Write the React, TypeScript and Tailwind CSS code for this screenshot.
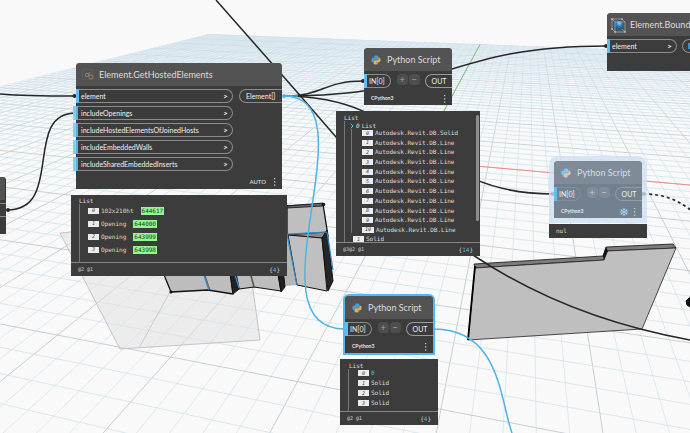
import React from "react";

const SANS = "font-['Lato','Noto_Sans',sans-serif]";
const MONO = "font-['DejaVu_Sans_Mono','Liberation_Mono',monospace]";

// Perspective ground grid: two line families, each with its own vanishing point
const HORIZON = -46;
const VP_A = 529;
const VP_B = -1912;

const lineA = (k: number) => {
  const bottom = 103 + 33.33 * k;
  return (y: number) => VP_A + ((bottom - VP_A) * (y - HORIZON)) / (433 - HORIZON);
};

const lineB = (k: number) => {
  const slope = 1 / (5.168 + 0.3047 * k);
  return (x: number) => HORIZON + (x - VP_B) * slope;
};

const range = (from: number, to: number) => Array.from({ length: to - from + 1 }, (_, i) => from + i);

const Grid: React.FC = () => {
  const xAxis = lineB(20);
  const yAxis = lineA(5);
  return (
    <g clipPath="url(#ground)" fill="none">
      {range(-45, 55).map((k) => (
        <line
          key={`a${k}`}
          x1={lineA(k)(20)}
          y1={20}
          x2={lineA(k)(433)}
          y2={433}
          stroke={k % 5 === 0 ? "url(#major)" : "#d3e4ee"}
          strokeWidth={0.8}
        />
      ))}
      {range(-9, 70).map((k) => (
        <line
          key={`b${k}`}
          x1={0}
          y1={lineB(k)(0)}
          x2={700}
          y2={lineB(k)(700)}
          stroke={k % 5 === 0 ? "url(#major)" : "#d0e3ee"}
          strokeWidth={0.8}
        />
      ))}
      <line x1={415} y1={xAxis(415)} x2={700} y2={xAxis(700)} stroke="#f08c8c" />
      <line x1={yAxis(20)} y1={20} x2={yAxis(161)} y2={161} stroke="#7cbf7c" />
    </g>
  );
};

const Solids: React.FC = () => (
  <g strokeLinejoin="round">
    <path d="M60 233L71 232H245L260 340L120 349Z" fill="#dfe0df" fillOpacity=".5" stroke="#b9b9b9" strokeWidth=".8" />
    <path d="M170 292L139 348" stroke="#c0c0c0" strokeWidth=".8" />

    <path d="M287 206L323 204L328 236L287 236Z" fill="#bfbfbf" stroke="#111" strokeWidth="1.3" />
    <path d="M287 206L323 203V206L287 208Z" fill="#666" stroke="#111" strokeWidth=".8" />
    <circle cx="323.5" cy="204.5" r="1.7" fill="#111" />
    <path d="M288 235L327 232L322 238Z" fill="#8b8b8b" stroke="#222" strokeWidth=".8" />
    <path d="M283 262L285 286L297 285L288 235H283Z" fill="#b5b5b5" />
    <path d="M288 235L322 238L327 291L297 285Z" fill="#c0c0c0" stroke="#111" />
    <path d="M322 238L327 230L333 281L328 291Z" fill="#262626" stroke="#111" />
    <path d="M287 234L297 285M287 234L327 232L333 270" fill="none" stroke="#2f86c4" strokeWidth="1.2" />

    <path d="M160 265L171 292L208 290L233 294L229 265Z" fill="#bdbdbd" stroke="#111" strokeWidth="1.3" />
    <path d="M229 265L235 268L239 289L233 294Z" fill="#222" stroke="#111" />
    <path d="M235 268L239 289L254 287L281 291L277 268Z" fill="#bdbdbd" stroke="#111" strokeWidth="1.2" />
    <path d="M277 268H283L285 287L281 292Z" fill="#222" stroke="#111" />
    <path d="M203 272L209 290M233 268L239 288" stroke="#2f86c4" strokeWidth="1.4" />
    <path d="M249 268L254 287" stroke="#555" strokeWidth="1.5" />
    <path d="M204 272L210 290" stroke="#555" strokeWidth=".8" />
    <circle cx="171" cy="292" r="1.6" fill="#111" />

    <path d="M474 264L603 256L606 247L673 244L676 248L607 251L604 260L475 268Z" fill="#7c7c7c" stroke="#111" strokeWidth=".8" />
    <path d="M475 268L604 260L607 251L676 248L642 329L468 340Z" fill="#bfbfbf" stroke="#222" strokeWidth=".8" />
    <path d="M603 256L606 247L608 251L604 260Z" fill="#111" />
    <path d="M475 266L468 340" stroke="#000" strokeWidth="1.8" />
    <path d="M686 301L690 297V307L687 305Z" fill="#111" stroke="#111" />
  </g>
);

const Wires: React.FC = () => (
  <g fill="none" stroke="#262626" strokeWidth="1.5">
    <path d="M216 0L297 92L336 137C390 195 430 228 476 257C520 286 590 322 690 340" />
    <path d="M0 94C25 96 50 96 75 96" />
    <path d="M7 210C65 210 22 113 76 113" />
    <path d="M284 96C324 96 323 81 364 81" />
    <path d="M284 96C446 96 445 46 607 46" />
    <path d="M284 96C418 96 419 194 553 194" />
    <path d="M643 194C664 194 678 200 692 211" strokeDasharray="3 3" strokeWidth="1.7" />
    <g stroke="#4db4e8">
      <path d="M284 96C375 96 245 329 345 329" />
      <path d="M434 329C500 329 500 400 512 433" />
      <path d="M284 96H298" />
    </g>
    <g fill="#262626" stroke="none">
      <circle cx="74.500" cy="96" r="2" />
      <circle cx="8" cy="210" r="2" />
      <circle cx="363" cy="81" r="2" />
      <circle cx="606" cy="46" r="2" />
      <circle cx="552.500" cy="194" r="2" />
      <circle cx="643.500" cy="194" r="2" />
      <circle cx="284" cy="96" r="2" fill="#4db4e8" />
    </g>
  </g>
);

const PythonIcon: React.FC<{ faded?: boolean }> = ({ faded }) => (
  <svg viewBox="0 0 24 24" className="size-2.5 shrink-0">
    <path
      fill={faded ? "#7ccbf7" : "#4a9fd8"}
      d="M11.900 1C6.500 1 6.800 3.400 6.800 3.400V6H12v.8H4.700S1 6.400 1 12s3.200 5.400 3.200 5.400h2v-2.700s-.1-3.200 3.200-3.200h5.300s3-.1 3-3V4S18.200 1 11.900 1ZM9 2.700a.95.95 0 1 1 0 1.900.95.95 0 0 1 0-1.900Z"
    />
    <path
      fill={faded ? "#dfc9ab" : "#dfb15b"}
      d="M12.100 23c5.400 0 5.100-2.400 5.100-2.400V18H12v-.8h7.300S23 17.600 23 12s-3.200-5.400-3.200-5.400h-2v2.700s.1 3.200-3.200 3.200H9.300s-3-.1-3 3V20s-.5 3 5.800 3Zm2.900-1.700a.95.95 0 1 1 0-1.900.95.95 0 0 1 0 1.900Z"
    />
  </svg>
);

const HostedIcon: React.FC = () => (
  <svg viewBox="0 0 12 12" className="size-3 shrink-0" fill="none">
    <rect x=".5" y=".5" width="10" height="10" stroke="#777" strokeWidth=".5" strokeDasharray="1 1" />
    <circle cx="5" cy="6" r="1.800" stroke="#929292" strokeWidth=".8" />
    <circle cx="9" cy="8" r="2" stroke="#b07a50" strokeWidth=".9" />
    <path d="M7 3L8 6" stroke="#b07a50" strokeWidth=".8" />
  </svg>
);

const BoxIcon: React.FC = () => (
  <svg viewBox="0 0 16 16" className="size-4 shrink-0" fill="none">
    <defs>
      <radialGradient id="ball" cx=".6" cy=".3" r=".7">
        <stop offset="0" stopColor="#8fd0f5" />
        <stop offset=".5" stopColor="#2580c4" />
        <stop offset="1" stopColor="#145a92" />
      </radialGradient>
    </defs>
    <circle cx="8.500" cy="8" r="4.200" fill="url(#ball)" />
    <path d="M2 2H12L15 5V15H5L2 12ZM2 2L5 5H15M5 5V15M12 12L15 15" stroke="#b9bec2" strokeWidth=".6" />
    <path d="M1.300 1.300h1.400v1.400H1.300zM11.300 1.300h1.400v1.400h-1.400zM14.300 14.300h1.400v1.400h-1.400zM1.300 11.300h1.400v1.400H1.300zM4.300 14.300h1.400v1.400H4.300z" fill="#c9cdd0" />
  </svg>
);

const MoreButton: React.FC = () => (
  <button aria-label="More" className="flex">
    <svg viewBox="0 0 2 8" className="h-2 w-0.5" fill="#c8c8c8">
      <path d="M0 0h1.300v1.300H0zM0 3.200h1.300v1.300H0zM0 6.400h1.300v1.300H0z" />
    </svg>
  </button>
);

interface InPortProps {
  label: string;
  tone?: "plain" | "default";
  chevron?: boolean;
}

const InPort: React.FC<InPortProps> = ({ label, tone = "plain", chevron = true }) => (
  <div className="relative flex h-3.5 items-center justify-between rounded-r-full border border-l-0 border-[#8c8c8c] pr-1 pl-[5px] text-[7px] leading-none font-normal text-[#f2f2f2]">
    <span
      className={
        tone === "plain"
          ? "absolute -inset-y-px left-0 w-[3px] bg-[#60bdee]"
          : "absolute -inset-y-px -left-[3px] w-[5px] border-r-2 border-[#58b2e0] bg-[#86cdf2]"
      }
    />
    <span>{label}</span>
    {chevron && (
      <button aria-label={`${label} levels`} className="text-[8px] leading-none font-bold">
        &gt;
      </button>
    )}
  </div>
);

interface PythonNodeProps {
  className: string;
  frozen?: boolean;
}

const PythonNode: React.FC<PythonNodeProps> = ({ className, frozen }) => (
  <section
    className={`absolute w-[88px] rounded-t ${className} ${
      frozen ? "bg-[#728190] ring-[5px] ring-[#cfe0f0]/80" : "bg-[#3c3c3c]"
    }`}
  >
    <header
      className={`flex h-[23px] items-center gap-1.5 rounded-t pl-[7px] ${
        frozen ? "bg-[#7f8b98] text-[#d5dce3]" : "bg-[#535353] text-[#dcdcdc]"
      }`}
    >
      <PythonIcon faded={frozen} />
      <h2 className="text-[9px] leading-3 whitespace-nowrap">Python Script</h2>
    </header>
    <div className="flex items-start justify-between pt-[3px]">
      <div className="w-[27px]">
        <InPort label="IN[0]" chevron={false} />
      </div>
      <div className="flex gap-px">
        {["+", "−"].map((sign) => (
          <button
            key={sign}
            className={`flex size-[11px] items-center justify-center rounded-sm text-[9px] leading-none ${
              frozen ? "bg-[#7f8c99] text-[#c4ced8]" : "bg-[#4e4e4e] text-[#a8a8a8]"
            }`}
          >
            {sign}
          </button>
        ))}
      </div>
      <div className="flex h-3.5 w-[27px] items-center justify-center rounded-l-full border border-r-0 border-[#9a9a9a] text-[7px] leading-none font-normal text-[#f2f2f2]">
        OUT
      </div>
    </div>
    <footer className="flex h-[17px] items-center justify-between pt-1 pr-1.5 pl-[7px] text-[#e8e8e8]">
      <span className="text-[5px] leading-none font-bold">CPython3</span>
      <span className="flex items-center gap-1.5">
        {frozen && (
          <svg viewBox="0 0 8 8" className="size-2" fill="none" stroke="#a9dcf7" strokeWidth=".8">
            <path d="M4 0V8M.5 2L7.500 6M7.500 2L.5 6M2.800 .7L4 1.900L5.200 .7M2.800 7.300L4 6.100L5.200 7.300M.5 3.500L2 3L1.700 1.200M7.500 4.500L6 5L6.300 6.800M7.500 3.500L6 3L6.300 1.200M.5 4.500L2 5L1.700 6.800" />
          </svg>
        )}
        <MoreButton />
      </span>
    </footer>
  </section>
);

const Index: React.FC<{ value: number }> = ({ value }) => (
  <span className="flex h-1.5 min-w-[11px] items-center justify-center bg-[#ececec] px-[3px] text-[5px] leading-none text-[#444] italic">
    {value}
  </span>
);

interface FooterProps {
  levels: string;
  count: number;
}

const PreviewFooter: React.FC<FooterProps> = ({ levels, count }) => (
  <footer className="flex h-3.5 items-center justify-between border-t border-[#858585] px-[7px] text-[6px] leading-none text-[#cfcfcf]">
    <span className="text-[5px]">{levels}</span>
    <span>
      {"{"}
      <span className="text-[#5cb3e6]">{count}</span>
      {"}"}
    </span>
  </footer>
);

const openings = [
  { name: "102x210ht", id: "644617" },
  { name: "Opening", id: "644000" },
  { name: "Opening", id: "643999" },
  { name: "Opening", id: "643998" },
];

const geometry = ["Solid", "Line", "Line", "Line", "Line", "Line", "Line", "Line", "Line", "Line", "Line"];

const App: React.FC = () => (
  <main className={`relative min-h-screen overflow-hidden bg-[#f9f9f9] ${SANS}`}>
    <svg className="absolute top-0 left-0" width="690" height="433">
      <defs>
        <clipPath id="ground">
          <path d="M0 86L209 34L690 52V433H0Z" />
        </clipPath>
        <linearGradient id="haze" x1="0" y1="34" x2="0" y2="140" gradientUnits="userSpaceOnUse">
          <stop offset="0" stopColor="#e2edf3" stopOpacity=".4" />
          <stop offset="1" stopColor="#f9f9f9" stopOpacity="0" />
        </linearGradient>
        <linearGradient id="major" x1="0" y1="34" x2="0" y2="220" gradientUnits="userSpaceOnUse">
          <stop offset="0" stopColor="#cddae0" />
          <stop offset="1" stopColor="#b9c5ca" />
        </linearGradient>
      </defs>
      <rect width="690" height="433" fill="url(#haze)" clipPath="url(#ground)" />
      <Grid />
      <Solids />
      <Wires />
    </svg>

    <section className="absolute top-[177px] -left-20 w-[86px] rounded-t-sm bg-[#3c3c3c] pb-[17px]">
      <header className="h-[23px] rounded-t-sm border-r border-[#333] bg-[#535353]" />
      <div className="mt-[3px] h-3.5 border-y border-[#8c8c8c]" />
    </section>

    <section className="absolute top-[63px] left-[76px] w-[206px] rounded-t bg-[#3c3c3c]">
      <header className="flex h-[23px] items-center gap-[5px] rounded-t bg-[#535353] pl-1.5 text-[#dcdcdc]">
        <HostedIcon />
        <h2 className="text-[9px] leading-3">Element.GetHostedElements</h2>
      </header>
      <div className="flex justify-between pt-[3px]">
        <div className="flex w-[157px] flex-col gap-[3px]">
          <InPort label="element" />
          <InPort label="includeOpenings" tone="default" />
          <InPort label="includeHostedElementsOfJoinedHosts" tone="default" />
          <InPort label="includeEmbeddedWalls" tone="default" />
          <InPort label="includeSharedEmbeddedInserts" tone="default" />
        </div>
        <div className="flex h-3.5 w-[43px] items-center rounded-l-full border border-r-0 border-[#8c8c8c] pl-1.5 text-[7px] leading-none font-normal text-[#f2f2f2]">
          Element[]
        </div>
      </div>
      <footer className="flex h-[18px] items-center justify-end gap-2 pt-1 pr-1.5 text-[6px] leading-none text-[#e8e8e8]">
        <span>AUTO</span>
        <MoreButton />
      </footer>
    </section>

    <section className={`absolute top-[195px] left-[71px] w-[216px] bg-[#3c3c3c] text-[6px] leading-none text-[#dedede] ${MONO}`}>
      <p className="pt-[3px] pl-2">List</p>
      <ul className="ml-2 flex flex-col gap-1 border-l border-[#777] pt-0.5 pb-2 pl-2">
        {openings.map((item, i) => (
          <li key={item.id} className="flex h-[9px] items-center gap-0.5">
            <Index value={i} />
            <span className="text-[#e2dda6]">{item.name}</span>
            <span className="ml-[5px] bg-[#93f793] px-px py-px text-[#1f3a1f]">{item.id}</span>
          </li>
        ))}
      </ul>
      <PreviewFooter levels="@2 @1" count={4} />
    </section>

    <PythonNode className="top-12 left-[364px]" />

    <section className={`absolute top-[111px] left-[336px] w-36 bg-[#3c3c3c] text-[6px] leading-none text-[#dedede] ${MONO}`}>
      <span className="absolute top-1 right-px h-[106px] w-[3px] rounded-full bg-[#8f8f8f]" />
      <div className="h-[131px] overflow-hidden">
        <p className="pt-1 pl-2">List</p>
        <div className="ml-2 border-l border-[#777]">
          <p className="flex items-center gap-0.5 pt-0.5 pl-[5px]">
            <svg viewBox="0 0 4 6" className="h-1.5 w-1" fill="none" stroke="#60bdee">
              <path d="M.7 .7L3 3L.7 5.300" />
            </svg>
            <span className="italic">0</span>
            <span>List</span>
          </p>
          <ul className="ml-1.5 flex h-[104px] flex-col justify-between border-l border-[#777] pt-px pl-2.5">
            {geometry.map((kind, i) => (
              <li key={i} className="flex items-center gap-0.5">
                <Index value={i} />
                <span>Autodesk.Revit.DB.{kind}</span>
              </li>
            ))}
          </ul>
          <p className="flex items-center gap-0.5 pt-[3px] pl-2">
            <Index value={1} />
            Solid
          </p>
        </div>
      </div>
      <PreviewFooter levels="@3@2 @1" count={14} />
    </section>

    <section className="absolute top-[13px] left-[607px] w-[120px] rounded-tl bg-[#3c3c3c] pb-[18px]">
      <header className="flex h-[23px] items-center gap-1 rounded-tl bg-[#535353] pl-[3px] text-[#dcdcdc]">
        <BoxIcon />
        <h2 className="text-[9px] leading-3">Element.Boundi</h2>
      </header>
      <div className="flex gap-[5px] pt-[3px]">
        <div className="w-[70px] shrink-0">
          <InPort label="element" />
        </div>
        <div className="flex h-3.5 grow items-center rounded-l-full border border-r-0 border-[#8c8c8c] pl-[5px]">
          <span className="h-1.5 w-1 bg-[#3f8fc4]" />
        </div>
      </div>
    </section>

    <PythonNode className="top-[161px] left-[554px]" frozen />
    <section className={`absolute top-[224px] left-[549px] w-[98px] bg-[#3c3c3c] py-1 pl-[7px] text-[6px] leading-none text-[#e2dda6] ${MONO}`}>
      nul
    </section>

    <PythonNode className="top-[296px] left-[345px] ring-2 ring-[#55b8ec]" />
    <section className={`absolute top-[359px] left-[340px] w-[98px] bg-[#3c3c3c] text-[6px] leading-none text-[#dedede] ${MONO}`}>
      <p className="pt-1 pl-[9px]">List</p>
      <ul className="ml-2 flex h-[42px] flex-col gap-1 border-l border-[#777] pt-px pl-[9px]">
        {["0", "Solid", "Solid", "Solid"].map((value, i) => (
          <li key={i} className="flex items-center gap-0.5">
            <Index value={i} />
            <span className={value === "0" ? "text-[#5cb3e6]" : ""}>{value}</span>
          </li>
        ))}
      </ul>
      <PreviewFooter levels="@2 @1" count={4} />
    </section>
  </main>
);

export default App;
